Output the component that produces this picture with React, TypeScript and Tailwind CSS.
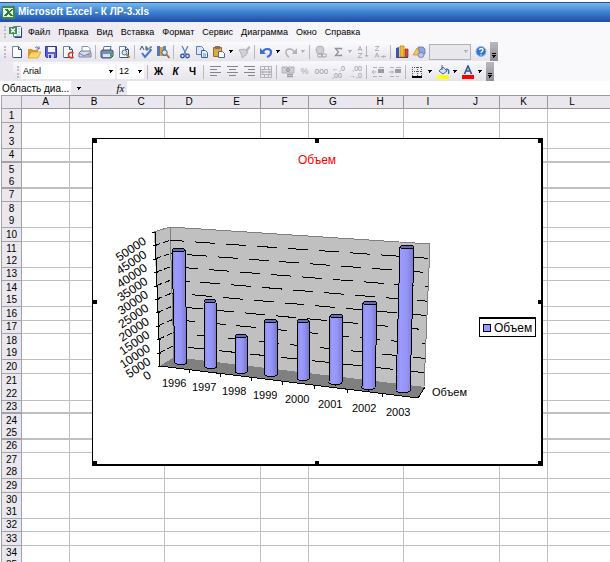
import React from "react";

type IconProps = { children: React.ReactNode };

function Icon({ children }: IconProps) {
  return (
    <svg viewBox="0 0 14 14" className="h-[14px] w-[14px] shrink-0" fill="none" aria-hidden="true">
      {children}
    </svg>
  );
}

function Tool({ label, children }: { label: string; children: React.ReactNode }) {
  return (
    <button
      type="button"
      aria-label={label}
      className="flex h-[17px] w-[17px] shrink-0 items-center justify-center text-[10px] font-bold leading-none"
    >
      {children}
    </button>
  );
}

function Arrow({ label, off = false }: { label: string; off?: boolean }) {
  return (
    <button type="button" aria-label={label} className="flex h-[17px] w-2 shrink-0 items-center justify-center">
      <Caret off={off} />
    </button>
  );
}

function Caret({ off = false }: { off?: boolean }) {
  return (
    <svg viewBox="0 0 4 3" className="h-[3px] w-1" aria-hidden="true" shapeRendering="crispEdges">
      <path d="M0 0h4v1H0zM1 1h2v1H1zM1 2h1v1H1z" fill={off ? "#b4b3ba" : "#000"} />
    </svg>
  );
}

function Sep() {
  return (
    <span className="flex w-[5px] shrink-0 justify-center">
      <span className="h-[14px] w-px bg-[#b9b8c0]" />
    </span>
  );
}

function Grip() {
  return <span className="h-3 w-0 shrink-0 border-l-2 border-dotted border-[#bdbbc4]" />;
}

function BarEnd() {
  return (
    <button
      type="button"
      aria-label="Параметры панелей инструментов"
      className="flex h-[19px] w-2 shrink-0 flex-col items-center justify-end gap-px bg-linear-to-b from-[#b9b8bd] to-[#8f8e94] pb-[3px]"
    >
      <span className="h-px w-1 bg-black" />
      <Caret />
    </button>
  );
}

const GREY = "#b2b1b8";

function Page() {
  return (
    <>
      <path d="M2.5 1.500h6l3 3v8h-9z" fill="#fbfcff" stroke="#6c84ac" />
      <path d="M8.500 1.500v3h3" stroke="#31507f" />
      <path d="M11.500 5v7.500h-8" stroke="#31507f" />
    </>
  );
}

function Lines({ x }: { x: number[] }) {
  return (
    <g shapeRendering="crispEdges">
      {x.map((start, i) => (
        <rect key={i} x={start} y={1 + i * 3} width={i % 2 ? 7 : 11} height="1" fill="#85848b" />
      ))}
    </g>
  );
}

function TitleBar() {
  return (
    <header className="flex h-[20px] shrink-0 items-center gap-[3px] border-y border-[#2450a6] bg-linear-to-b from-[#76b8ea] via-[#3f82d0] to-[#2450b0] pl-[2px]">
      <svg viewBox="0 0 13 13" className="h-[13px] w-[13px]" aria-hidden="true" shapeRendering="crispEdges">
        <path d="M0 0h13v13H0z" fill="#3b8a4b" />
        <path d="M1 2h10v9H1z" fill="#eaf5e6" />
        <path d="M2 3h3l2 2 2-2h2L8 6l3 4H8L6 8l-2 2H2l3-4z" fill="#2c7d3c" />
      </svg>
      <h1 className="text-[10px] font-bold leading-none text-white">Microsoft Excel - К ЛР-3.xls</h1>
    </header>
  );
}

const menus = ["Файл", "Правка", "Вид", "Вставка", "Формат", "Сервис", "Диаграмма", "Окно", "Справка"];

function MenuBar() {
  return (
    <nav className="flex h-[20px] shrink-0 items-center pl-1">
      <Grip />
      <svg viewBox="0 0 14 14" className="ml-[3px] h-[14px] w-[14px]" aria-hidden="true">
        <path d="M4.500 1.500h7l1 1v9h-8z" fill="#fff" stroke="#5e779e" />
        <path d="M12.500 3v9.500h-7" stroke="#23426e" fill="none" />
        <path d="M0 2h8v7H0z" fill="#3e8d50" />
        <path d="M2 3.500l4 4M6 3.500l-4 4" stroke="#fff" strokeWidth="1.300" />
        <path d="M7 10h4M9 4h2M9 7h2" stroke="#9bb2d4" />
      </svg>
      <ul className="ml-[5px] flex gap-2">
        {menus.map((m) => (
          <li key={m}>
            <button type="button" className="block text-[9px] leading-none">
              {m}
            </button>
          </li>
        ))}
      </ul>
    </nav>
  );
}

function StandardBar() {
  return (
    <div role="toolbar" aria-label="Стандартная" className="flex">
      <div className="flex h-[19px] items-center bg-linear-to-b from-[#fbfafd] to-[#e6e4eb] pl-1">
        <Grip />
        <span className="w-[2px]" />
        <Tool label="Создать"><Icon><Page /></Icon></Tool>
        <Tool label="Открыть">
          <Icon>
            <path d="M1 4h4l1 1h5v8H1z" fill="#d99a2b" />
            <path d="M1 13l3-6h10l-3 6z" fill="#ffd667" stroke="#c98a1e" strokeWidth=".6" />
            <path d="M8 3c2-2 3-1 4 1M12 1.500V4H9.500" stroke="#3f6fb3" />
          </Icon>
        </Tool>
        <Tool label="Сохранить">
          <Icon>
            <path d="M1.500 1.500h11v11h-10l-1-1z" fill="#5a5fd2" stroke="#32379b" />
            <path d="M4 2h7v5H4z" fill="#f3f4ff" />
            <path d="M4 9h6v4H4z" fill="#c9cdf0" />
            <path d="M5 10h2v3H5z" fill="#32379b" />
          </Icon>
        </Tool>
        <Tool label="Разрешения">
          <Icon>
            <Page />
            <path d="M12.500 8.500c-2-2-5-1-5 1.500s3 3.500 5 2" stroke="#d8401f" strokeWidth="1.800" />
          </Icon>
        </Tool>
        <Tool label="Сообщение">
          <Icon>
            <path d="M4 1.500h6l2 2V9H4z" fill="#fff" stroke="#8494b4" />
            <path d="M1 8l2-2h9l1 2v4H1z" fill="#d5dced" stroke="#6e7fa5" />
            <path d="M1 8l5 3 6-3" stroke="#6e7fa5" />
            <path d="M9 10h3" stroke="#d2503c" />
          </Icon>
        </Tool>
        <Sep />
        <Tool label="Печать">
          <Icon>
            <path d="M4 1.500h7l-1 4H3z" fill="#fff" stroke="#5874a4" />
            <path d="M1 6l2-1h9l1 1v5l-2 2H2l-1-1z" fill="#7c8eb0" stroke="#3c5078" />
            <path d="M3 9h7v3H3z" fill="#dbe3f3" />
            <path d="M10 8h3v3h-3z" fill="#38a84c" />
          </Icon>
        </Tool>
        <Tool label="Просмотр">
          <Icon>
            <Page />
            <circle cx="7.500" cy="7.500" r="2.500" fill="#cfe4fb" stroke="#4b6a9a" />
            <path d="M9.500 9.500l3 3" stroke="#b7772f" strokeWidth="2" />
          </Icon>
        </Tool>
        <Sep />
        <Tool label="Орфография">
          <Icon>
            <path d="M1 5l2-4 2 4M7 1v4h2V3H7M13 2h-2v3h2" stroke="#2f4f8d" />
            <path d="M3 8l3 4 6-7" stroke="#3f78d0" strokeWidth="2" />
          </Icon>
        </Tool>
        <Tool label="Справочные материалы">
          <Icon>
            <path d="M1 1h3v10H1z" fill="#5579bb" />
            <path d="M4 2h3v9H4z" fill="#d3a63e" />
            <path d="M7 1h3v10H7z" fill="#6289c8" />
            <circle cx="8.500" cy="7.500" r="2.700" fill="#d6e8fb" stroke="#3b5683" />
            <path d="M10.500 9.500l3 3.500" stroke="#a8672c" strokeWidth="1.800" />
          </Icon>
        </Tool>
        <Sep />
        <Tool label="Вырезать">
          <Icon>
            <path d="M4 1l4 8M10 1L6 9" stroke="#5d83bd" strokeWidth="1.300" />
            <circle cx="4.500" cy="11" r="1.800" stroke="#274f9c" strokeWidth="1.300" />
            <circle cx="9.500" cy="11" r="1.800" stroke="#274f9c" strokeWidth="1.300" />
          </Icon>
        </Tool>
        <Tool label="Копировать">
          <Icon>
            <path d="M1.500 1.500h5l2 2v6h-7z" fill="#dce8fb" stroke="#4f79c0" />
            <path d="M6.500 5.500h4l2 2v5h-6z" fill="#eef4ff" stroke="#3862ad" />
            <path d="M8 9h3M8 11h3" stroke="#5f8bd0" />
          </Icon>
        </Tool>
        <Tool label="Вставить">
          <Icon>
            <path d="M1.500 2.500h8v9h-8z" fill="#e0a83e" stroke="#9a6a1e" />
            <path d="M3 1h5v3H3z" fill="#7a7468" />
            <path d="M6.500 6.500h4l2 2v4h-6z" fill="#fff" stroke="#4f6b9b" />
          </Icon>
        </Tool>
        <Arrow label="Варианты вставки" />
        <Tool label="Формат по образцу">
          <Icon>
            <path d="M8 5l4-4 1.500 1.500L10 7z" fill="#b9b8bf" />
            <path d="M2 5l5-1 4 3-2 3-4 3c0-3-1-5-3-8z" fill="#d2d1d7" stroke={GREY} />
          </Icon>
        </Tool>
        <Sep />
        <Tool label="Отменить">
          <Icon>
            <path d="M4 7c1-4 8-4 8 0 0 2-1 4-4 5" stroke="#3f6cd0" strokeWidth="2.200" />
            <path d="M1 3v6h6z" fill="#3f6cd0" />
          </Icon>
        </Tool>
        <Arrow label="Список отмены" />
        <Tool label="Вернуть">
          <Icon>
            <path d="M10 7c-1-4-8-4-8 0 0 2 1 4 3 5" stroke={GREY} strokeWidth="1.500" />
            <path d="M13 3v6H8z" fill={GREY} />
          </Icon>
        </Tool>
        <Arrow label="Список возврата" off />
        <Sep />
        <Tool label="Гиперссылка">
          <Icon>
            <circle cx="6" cy="5" r="4" fill="#cfced4" stroke={GREY} />
            <rect x="3.500" y="9" width="5" height="3" rx="1.500" stroke="#a09fa7" />
            <rect x="7.500" y="9" width="5" height="3" rx="1.500" stroke="#a09fa7" />
          </Icon>
        </Tool>
        <Tool label="Автосумма">
          <Icon><path d="M10.500 4.500v-1H4.500L7.500 7l-3 3.500h6v-1" stroke="#92919a" strokeWidth="1.300" /></Icon>
        </Tool>
        <Arrow label="Варианты автосуммы" off />
        <Tool label="Сортировка по возрастанию">
          <Icon>
            <path d="M2 6l2-4.500L6 6M2.700 4.500h2.600M2 8.500h4l-4 4h4M10.500 1v10M9 10l1.500 2 1.500-2" stroke={GREY} />
          </Icon>
        </Tool>
        <Tool label="Сортировка по убыванию">
          <Icon>
            <path d="M2 1.500h4l-4 4h4M2 12.500L4 8l2 4.500M2.700 11h2.600M8 11.500h5M11 10l-1 3" stroke={GREY} />
          </Icon>
        </Tool>
        <Sep />
        <Tool label="Мастер диаграмм">
          <Icon>
            <path d="M1 3l3-1v10H1z" fill="#315cad" />
            <path d="M5 1h4v11H5z" fill="#f2bd35" stroke="#bd761b" strokeWidth=".7" />
            <path d="M10 4h3v8h-3z" fill="#d84e2d" stroke="#972b16" strokeWidth=".7" />
            <path d="M1 12.500h12" stroke="#41506e" />
          </Icon>
        </Tool>
        <Tool label="Рисование">
          <Icon>
            <path d="M1 10l4-7 4 7z" fill="#f1c75a" stroke="#c48b2b" strokeWidth=".7" />
            <path d="M6 2h5l2 2v5H8z" fill="#8da7de" stroke="#5a6fb4" strokeWidth=".7" />
            <ellipse cx="9" cy="10" rx="3" ry="2.500" fill="#b8c7ec" stroke="#5869a4" strokeWidth=".7" />
          </Icon>
        </Tool>
        <button
          type="button"
          aria-label="Масштаб"
          className="ml-[2px] mr-[2px] flex h-4 w-[42px] items-center justify-end border border-[#b2b1b8] bg-[#e8e7ec] pr-[2px]"
        >
          <Caret off />
        </button>
        <Tool label="Справка">
          <Icon>
            <circle cx="6" cy="6.500" r="5" fill="#3676cf" stroke="#8bb4ea" />
            <path d="M4.500 5c0-2 3.500-2 3.500 0C8 6.500 6 6.500 6 8M6 9.200v1.200" stroke="#fff" strokeWidth="1.300" />
          </Icon>
        </Tool>
      </div>
      <BarEnd />
    </div>
  );
}

function Combo({ label, value, className }: { label: string; value: string; className: string }) {
  return (
    <label className={"grid h-[15px] shrink-0 items-center bg-white " + className}>
      <select
        aria-label={label}
        defaultValue={value}
        className="col-start-1 row-start-1 w-full appearance-none bg-transparent pl-[2px] text-[9px] leading-none"
      >
        <option>{value}</option>
      </select>
      <span className="pointer-events-none col-start-1 row-start-1 mr-[2px] justify-self-end">
        <Caret />
      </span>
    </label>
  );
}

function FormatBar() {
  return (
    <div role="toolbar" aria-label="Форматирование" className="flex pl-[13px]">
      <div className="flex h-[19px] items-center bg-linear-to-b from-[#f8f7fa] to-[#e6e4eb] pl-1 pr-[2px]">
        <Grip />
        <Combo label="Шрифт" value="Arial" className="ml-[2px] w-[94px]" />
        <Combo label="Размер" value="12" className="ml-[2px] mr-px w-[27px]" />
        <Sep />
        <Tool label="Полужирный">Ж</Tool>
        <Tool label="Курсив"><i>К</i></Tool>
        <Tool label="Подчеркнутый">Ч</Tool>
        <Sep />
        <Tool label="По левому краю"><Icon><Lines x={[2, 2, 2, 2]} /></Icon></Tool>
        <Tool label="По центру"><Icon><Lines x={[2, 4, 2, 4]} /></Icon></Tool>
        <Tool label="По правому краю"><Icon><Lines x={[2, 6, 2, 6]} /></Icon></Tool>
        <Tool label="Объединить">
          <Icon>
            <path d="M1.500 1.500h11v11h-11zM1 4.500h12M1 9.500h12M5.500 1v3M9.500 1v3M5.500 10v3M9.500 10v3" stroke={GREY} />
            <path d="M3 7h8M4 5.500L2.500 7 4 8.500M10 5.500L11.500 7 10 8.500" stroke="#96959d" />
          </Icon>
        </Tool>
        <Sep />
        <Tool label="Денежный формат">
          <Icon>
            <path d="M1 2h12v6H1z" fill="#cfced4" stroke={GREY} />
            <circle cx="7" cy="5" r="1.500" stroke="#8f8e96" />
            <path d="M6 9.500h6M6 11.500h6" stroke="#9f9ea6" strokeWidth="1.500" />
          </Icon>
        </Tool>
        <Tool label="Процентный формат"><span className="text-[9px] font-normal text-[#a5a4ac]">%</span></Tool>
        <Tool label="Формат с разделителями"><span className="text-[8px] font-normal text-[#8f8e96]">000</span></Tool>
        <Tool label="Увеличить разрядность">
          <span className="text-left text-[7px] font-normal leading-[7px] text-[#8f8e96]">←,0<br />,00</span>
        </Tool>
        <Tool label="Уменьшить разрядность">
          <span className="text-right text-[7px] font-normal leading-[7px] text-[#8f8e96]">,00<br />→,0</span>
        </Tool>
        <Sep />
        <Tool label="Уменьшить отступ">
          <Icon>
            <path d="M2 2.500h4M8 2.500h5M2 11.500h4M8 11.500h3M5.500 7H1M3 5L1 7l2 2" stroke={GREY} />
            <path d="M7 4h6v4H7z" fill="#9c9ba3" />
          </Icon>
        </Tool>
        <Tool label="Увеличить отступ">
          <Icon>
            <path d="M2 2.500h4M8 2.500h5M2 11.500h4M8 11.500h3M1 7h4.500M3.500 5l2 2-2 2" stroke={GREY} />
            <path d="M7 4h6v4H7z" fill="#9c9ba3" />
          </Icon>
        </Tool>
        <Sep />
        <Tool label="Границы">
          <Icon>
            <path d="M2 2.500h10M2 6.500h10M2.500 2v9M7.500 2v9M11.500 2v9" stroke="#55545c" strokeDasharray="1 1" />
            <path d="M2 11h10v2H2z" fill="#000" />
          </Icon>
        </Tool>
        <span className="w-px" />
        <Arrow label="Варианты границ" />
        <Tool label="Цвет заливки">
          <Icon>
            <path d="M1 10h12v4H1z" fill="#ffff00" />
            <path d="M3 6l4-4 4 4-4 3z" fill="#d5e3f7" stroke="#46689f" />
            <path d="M6 0v5" stroke="#46689f" />
            <path d="M10 4c3 0 3 2 2.500 5" stroke="#3f70bd" strokeWidth="1.500" />
          </Icon>
        </Tool>
        <Arrow label="Варианты заливки" />
        <Tool label="Цвет шрифта">
          <Icon>
            <path d="M1 10h12v4H1z" fill="#ff0000" />
            <path d="M3.500 9l3.500-8 3.500 8M5 6h4" stroke="#315592" strokeWidth="1.600" />
          </Icon>
        </Tool>
        <Arrow label="Варианты цвета шрифта" />
      </div>
      <BarEnd />
    </div>
  );
}

function FormulaBar() {
  return (
    <div className="flex h-[14px] shrink-0 items-stretch bg-[#eae8ee]">
      <input
        aria-label="Имя"
        readOnly
        value="Область диа..."
        className="w-[71px] bg-white pl-[2px] text-[10px] leading-none outline-none"
      />
      <button type="button" aria-label="Список имен" className="flex w-4 items-center justify-center">
        <Caret />
      </button>
      <button
        type="button"
        aria-label="Вставка функции"
        className="ml-[27px] w-[13px] font-['Liberation_Serif',serif] text-[11px] italic leading-none"
      >
        fx
      </button>
      <input aria-label="Строка формул" className="min-w-0 flex-1 bg-white outline-none" />
    </div>
  );
}

type Line = "none" | "thin" | "thick";

// Height of each row, with the rule drawn under it.
const rows: [number, Line][] = [
  [14, "thin"], [13, "none"], [13, "thin"], [14, "thick"], [13, "none"], [13, "thick"],
  [13, "thin"], [13, "none"], [13, "thin"], [14, "thin"], [13, "none"], [13, "thin"],
  [13, "thin"], [13, "none"], [13, "thin"], [14, "thin"], [13, "thin"], [13, "none"],
  [13, "thin"], [14, "thin"], [13, "none"], [14, "thin"], [13, "thick"], [13, "none"],
  [13, "thick"], [13, "thin"], [13, "none"], [13, "thin"], [14, "thin"], [13, "none"],
  [13, "thin"], [13, "thin"], [14, "thin"], [13, "none"], [13, "thin"],
];

const columns: { name: string; width: number; line: boolean }[] = [
  { name: "A", width: 48, line: true },
  { name: "B", width: 48, line: false },
  { name: "C", width: 47, line: true },
  { name: "D", width: 48, line: false },
  { name: "E", width: 48, line: true },
  { name: "F", width: 48, line: true },
  { name: "G", width: 48, line: false },
  { name: "H", width: 47, line: true },
  { name: "I", width: 48, line: false },
  { name: "J", width: 48, line: true },
  { name: "K", width: 48, line: true },
  { name: "L", width: 48, line: false },
];

const under: Record<Line, string> = { none: "", thin: "border-b", thick: "border-b-2" };

function Sheet() {
  return (
    <table className="w-full table-fixed border-separate border-spacing-0 border-l border-[#a3a2a9] text-center text-[10px] leading-none">
      <colgroup>
        <col style={{ width: 20 }} />
        {columns.map((c) => (
          <col key={c.name} style={{ width: c.width }} />
        ))}
        <col />
      </colgroup>
      <thead>
        <tr className="h-[14px] bg-[#eae8ee]">
          <th className="border-y border-r border-[#a3a2a9] p-0" />
          {columns.map((c) => (
            <th
              key={c.name}
              scope="col"
              className={"border-y border-[#98979e] p-0 font-normal " + (c.line ? "border-r" : "")}
            >
              {c.name}
            </th>
          ))}
          <th className="border-y border-[#98979e] p-0" />
        </tr>
      </thead>
      <tbody>
        {rows.map(([height, line], i) => (
          <tr key={i} style={{ height }}>
            <th
              scope="row"
              className={"border-r border-[#a3a2a9] bg-[#eae8ee] p-0 font-normal " + under[line]}
            >
              {i + 1}
            </th>
            {columns.map((c) => (
              <td
                key={c.name}
                className={"border-[#c0c0c0] p-0 " + under[line] + (c.line ? " border-r" : "")}
              />
            ))}
            <td className={"border-[#c0c0c0] p-0 " + under[line]} />
          </tr>
        ))}
      </tbody>
    </table>
  );
}

type Bar = {
  year: string;
  top: [number, number, number];
  foot: [number, number, number];
  label: [number, number];
};

// top and foot hold left x, right x and y of the cylinder's ends.
const bars: Bar[] = [
  { year: "1996", top: [172, 185, 250], foot: [175, 187, 363], label: [162, 387] },
  { year: "1997", top: [204, 216, 301], foot: [205, 217, 367], label: [192, 391] },
  { year: "1998", top: [235, 247, 336], foot: [235, 247, 372], label: [222, 395] },
  { year: "1999", top: [264, 277, 321], foot: [265, 277, 375], label: [253, 399] },
  { year: "2000", top: [297, 309, 321], foot: [297, 309, 379], label: [285, 403] },
  { year: "2001", top: [330, 343, 316], foot: [329, 342, 383], label: [318, 408] },
  { year: "2002", top: [363, 377, 303], foot: [362, 375, 388], label: [352, 412] },
  { year: "2003", top: [400, 414, 247], foot: [396, 410, 391], label: [386, 416] },
];

const steps = [50000, 45000, 40000, 35000, 30000, 25000, 20000, 15000, 10000, 5000, 0];

const handles = [
  [93, 139], [315, 139], [538, 139], [93, 300], [538, 300], [93, 461], [315, 461], [538, 461],
];

function Chart() {
  return (
    <svg
      viewBox="92 138 451 328"
      className="absolute left-[92px] top-[43px] h-[328px] w-[451px]"
      role="img"
      aria-label="Объем"
      shapeRendering="crispEdges"
    >
      <defs>
        <linearGradient id="cylinder">
          <stop offset="0" stopColor="#8585e8" />
          <stop offset=".25" stopColor="#9c9cff" />
          <stop offset=".6" stopColor="#9494f4" />
          <stop offset="1" stopColor="#7878cf" />
        </linearGradient>
      </defs>
      <path d="M92 138h451v328H92z" fill="#000" />
      <path d="M93 139h448v325H93z" fill="#fff" />
      {handles.map(([x, y]) => (
        <rect key={x + "-" + y} x={x} y={y} width="4" height="4" fill="#000" />
      ))}

      <text x="317" y="164" textAnchor="middle" fontSize="12" fill="#ff0000">Объем</text>

      <path d="M154 232L170 227L430 244L424 387L174 357L160 366z" fill="#c0c0c0" />
      <path d="M160 366L174 357L425 387L418 398z" fill="#808080" />
      <path d="M154 232L170 227L430 244L424 387M170 227L174 357" stroke="#808080" fill="none" />
      {steps.slice(1, 10).map((v, i) => {
        const n = i + 1;
        return (
          <g key={v} stroke="#000" fill="none">
            <path
              d={`M${170 + n * 0.4} ${227 + n * 13.2}L${429 - n * 0.5} ${244 + n * 14.3}`}
              strokeDasharray="20 11"
              strokeDashoffset={n * 9 - 3}
            />
            <path d={`M${154 + n * 0.6} ${232 + n * 13.4}L${170 + n * 0.4} ${227 + n * 13.2}`} strokeDasharray="6 3" />
          </g>
        );
      })}
      <path d="M155 232L160 366L418 398L425 387" stroke="#000" fill="none" />
      {steps.map((v, i) => (
        <g key={v}>
          <path d={`M${152 + i * 0.6} ${232.5 + i * 13.4}h4`} stroke="#000" />
          <text
            fontSize="12"
            textAnchor="end"
            transform={`translate(${147 + i * 0.5} ${243 + i * 13.4}) rotate(-34)`}
          >
            {v}
          </text>
        </g>
      ))}
      {[189, 220, 251, 282, 314, 347, 382].map((x) => (
        <path key={x} d={`M${x} ${370 + (x - 189) * 0.124}v3`} stroke="#000" />
      ))}

      {bars.map(({ year, top, foot, label }) => (
        <g key={year}>
          <path
            d={`M${top[0]} ${top[2]}L${foot[0]} ${foot[2]}Q${(foot[0] + foot[1]) / 2} ${foot[2] + 4} ${foot[1]} ${foot[2]}L${top[1]} ${top[2]}z`}
            fill="url(#cylinder)"
            stroke="#000"
          />
          <ellipse
            cx={(top[0] + top[1]) / 2}
            cy={top[2]}
            rx={(top[1] - top[0]) / 2}
            ry="1.800"
            fill="#6b6bb8"
            stroke="#000"
          />
          <text x={label[0]} y={label[1]} fontSize="11">{year}</text>
        </g>
      ))}
      <text x="432" y="396" fontSize="11">Объем</text>

      <path d="M479.500 318.500h56v18h-56z" fill="#fff" stroke="#000" />
      <path d="M479 317h57v2h-57z" fill="#000" />
      <path d="M483.500 324.500h7v7h-7z" fill="#9999ff" stroke="#000" />
      <text x="494" y="332" fontSize="12">Объем</text>
    </svg>
  );
}

export default function App() {
  return (
    <div className="flex h-screen flex-col overflow-hidden bg-white pt-[2px] font-['Liberation_Sans',Arial,sans-serif] text-black">
      <TitleBar />
      <div className="shrink-0 bg-linear-to-r from-[#eae8ee] to-[#f9f8fb] to-60%">
        <MenuBar />
        <StandardBar />
        <div className="pt-px">
          <FormatBar />
        </div>
      </div>
      <FormulaBar />
      <main className="relative min-h-0 flex-1 overflow-hidden pl-px">
        <Sheet />
        <Chart />
      </main>
    </div>
  );
}
